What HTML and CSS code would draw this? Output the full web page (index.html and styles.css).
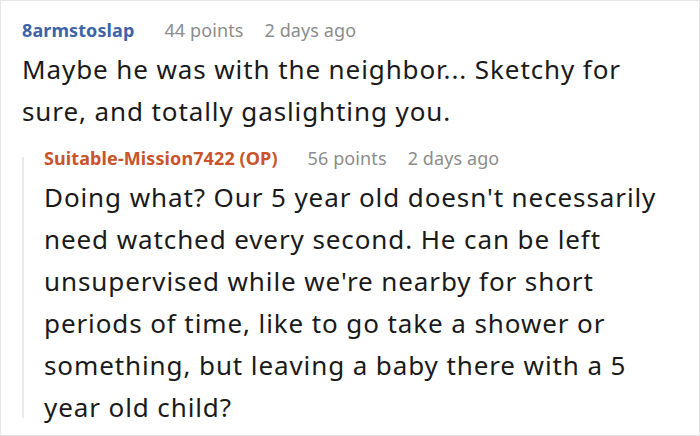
FILE: index.html
```html
<!DOCTYPE html>
<html>
<head>
<meta charset="utf-8">
<link rel="stylesheet" href="styles.css">
</head>
<body>
<div class="frame">
  <div class="comment">
    <div class="meta">
      <span class="author">8armstoslap</span>
      <span class="points">44 points</span>
      <span class="time">2 days ago</span>
    </div>
    <p class="text">Maybe he was with the neighbor... Sketchy for sure, and totally gaslighting you.</p>
    <div class="reply">
      <div class="meta">
        <span class="author op">Suitable-Mission7422 (OP)</span>
        <span class="points">56 points</span>
        <span class="time">2 days ago</span>
      </div>
      <p class="text">Doing what? Our 5 year old doesn't necessarily need watched every second. He can be left unsupervised while we're nearby for short periods of time, like to go take a shower or something, but leaving a baby there with a 5 year old child?</p>
    </div>
  </div>
</div>
</body>
</html>
```

FILE: styles.css
```css
html, body {
  margin: 0;
  padding: 0;
  background: #ffffff;
}
.frame {
  box-sizing: border-box;
  width: 700px;
  height: 436px;
  border: 1px solid #e6e6e6;
  overflow: hidden;
  font-family: "Noto Sans", "Open Sans", sans-serif;
}
.comment {
  padding: 17px 24px 0 21px;
}
.meta {
  display: flex;
  align-items: baseline;
  gap: 21px;
  font-size: 18px;
  line-height: 24px;
  letter-spacing: 0.1px;
  color: #8c8c8c;
}
.author {
  font-weight: 700;
  color: #3e64a6;
  margin-right: 9px;
}
.author.op {
  color: #c9532a;
}
.text {
  margin: 6px 0 0 0;
  font-size: 26px;
  letter-spacing: 0.9px;
  line-height: 42px;
  color: #1a1a1a;
}
.reply {
  position: relative;
  margin-top: 14px;
  padding-left: 22px;
}
.reply::before {
  content: "";
  position: absolute;
  left: 0;
  top: 11px;
  bottom: 10px;
  width: 2px;
  background: #eaeaea;
}
```
